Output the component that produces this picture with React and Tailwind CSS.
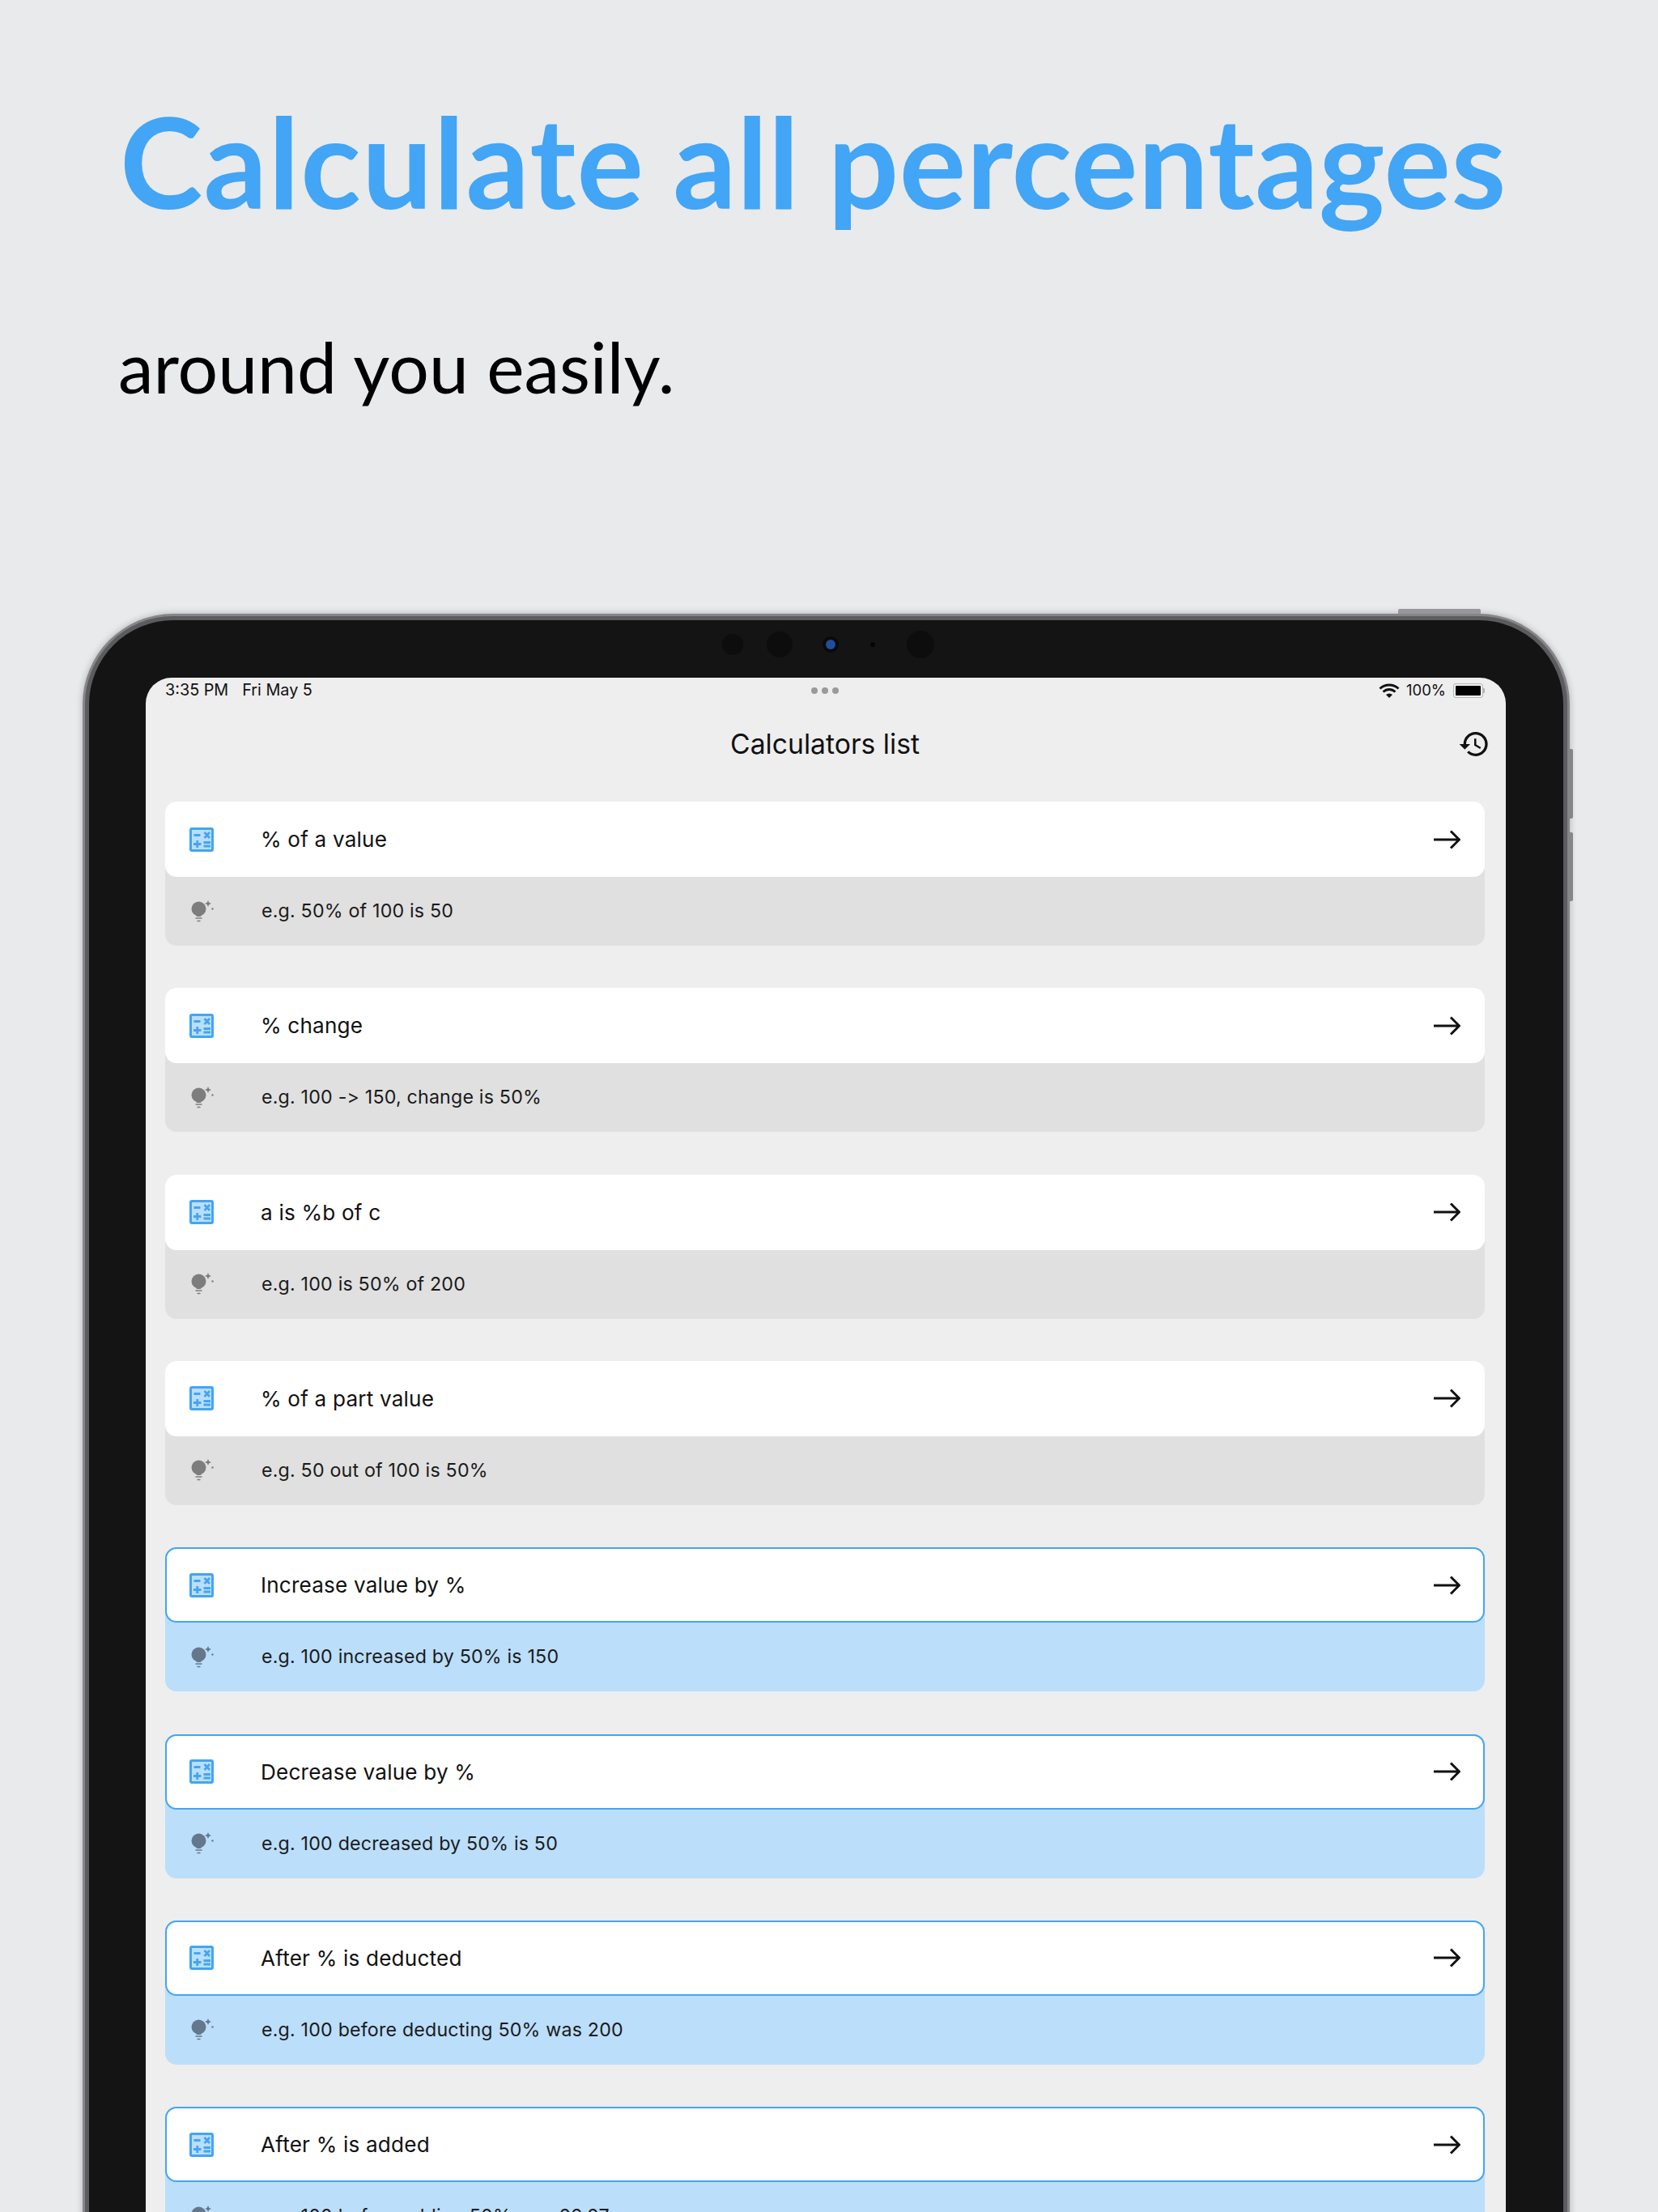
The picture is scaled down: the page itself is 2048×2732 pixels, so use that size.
const sans = "font-['Inter','Liberation_Sans',sans-serif]";

const calculators = [
  { title: '% of a value', hint: 'e.g. 50% of 100 is 50' },
  { title: '% change', hint: 'e.g. 100 -> 150, change is 50%' },
  { title: 'a is %b of c', hint: 'e.g. 100 is 50% of 200' },
  { title: '% of a part value', hint: 'e.g. 50 out of 100 is 50%' },
  { title: 'Increase value by %', hint: 'e.g. 100 increased by 50% is 150', active: true },
  { title: 'Decrease value by %', hint: 'e.g. 100 decreased by 50% is 50', active: true },
  { title: 'After % is deducted', hint: 'e.g. 100 before deducting 50% was 200', active: true },
  { title: 'After % is added', hint: 'e.g. 100 before adding 50% was 66.67', active: true },
];

function CalcIcon() {
  return (
    <svg width="30" height="30" viewBox="0 0 30 30" className="shrink-0">
      <rect x="0" y="0" width="30" height="30" rx="3" fill="#42a5f5" />
      <rect x="3" y="3" width="24" height="24" fill="#bbdefb" />
      <path d="M5.500 9.500h8M18.500 6l6.500 7M25 6l-6.500 7M5 20.500h9.500M9.750 16v9M17.500 18.500h8.500M17.500 23h8.500" stroke="#42a5f5" strokeWidth="2.8" fill="none" />
    </svg>
  );
}

function BulbIcon({ color }) {
  return (
    <svg width="28" height="28" viewBox="0 0 28 28" className="-mt-[2px] shrink-0">
      <circle cx="9.5" cy="11.5" r="9" fill={color} />
      <path d="M5 15h9l-2 6H7z" fill={color} />
      <path d="M5.500 23h8M7.500 26.500h4" stroke={color} strokeWidth="1.6" fill="none" />
      <path d="M21 1l1.200 2.800L25 5l-2.800 1.200L21 9l-1.200-2.800L17 5l2.800-1.200z" fill={color} />
      <circle cx="26.5" cy="11.5" r="1.2" fill={color} />
    </svg>
  );
}

function ArrowIcon() {
  return (
    <svg width="33" height="24" viewBox="0 0 33 24" className="shrink-0" fill="none" stroke="#111" strokeWidth="3">
      <path d="M0 12h31M21 1.500L31.500 12 21 22.500" />
    </svg>
  );
}

function HistoryIcon() {
  return (
    <svg width="40" height="40" viewBox="0 0 24 24" fill="#111" className="-mr-[7px]">
      <path d="M13 3c-4.970 0-9 4.030-9 9H1l3.890 3.890.07.14L9 12H6c0-3.870 3.130-7 7-7s7 3.130 7 7-3.130 7-7 7c-1.930 0-3.680-.79-4.940-2.060l-1.420 1.420C8.270 19.990 10.510 21 13 21c4.970 0 9-4.030 9-9s-4.030-9-9-9zm-1 5v5l4.280 2.540.72-1.210-3.500-2.080V8H12z" />
    </svg>
  );
}

function WifiIcon() {
  return (
    <svg width="26" height="18" viewBox="0 0 26 18" fill="none" stroke="#111" strokeWidth="2.8">
      <path d="M1.500 6.500C8 .5 18 .5 24.500 6.500M5.500 10.500c4.500-4 10.500-4 15 0" />
      <path d="M9 14c2.500-2 5.500-2 8 0l-4 4z" fill="#111" stroke="none" />
    </svg>
  );
}

function CalculatorCard({ title, hint, active }) {
  return (
    <div className={`rounded-[14px] ${active ? 'bg-[#bbdefb]' : 'bg-[#e0e0e0]'}`}>
      <div
        className={`flex h-[93px] items-center rounded-[14px] bg-white ${
          active ? 'border-2 border-[#42a5f5] px-[28px]' : 'px-[30px]'
        }`}
      >
        <CalcIcon />
        <span className={`ml-[58px] flex-1 text-[26.1px] tracking-[0.2px] text-[#111] ${sans}`}>{title}</span>
        <ArrowIcon />
      </div>
      <div className="flex h-[85px] items-center pl-[32px]">
        <BulbIcon color={active ? '#64788c' : '#7d7d7d'} />
        <span className={`ml-[59px] text-[23.2px] tracking-[0.2px] text-[#1a1a1a] ${sans}`}>{hint}</span>
      </div>
    </div>
  );
}

export default function App() {
  return (
    <div className="h-[2732px] w-[2048px] overflow-hidden bg-[#e9eaec]">
      <div className="h-[758px] pl-[146px]">
        <h1 className="pt-[109px] pl-[2px] text-[154.5px] leading-[180px] font-bold tracking-[0.4px] whitespace-nowrap text-[#42a5f5] [word-spacing:-3px] font-['Lato',sans-serif]">
          <span className="tracking-[1.4px]">Calculate</span> all percentages
        </h1>
        <p className="mt-[109px] text-[87.6px] leading-[110px] text-black font-['Lato',sans-serif]">around you easily.</p>
      </div>

      <div className="relative ml-[102px] h-[2100px] w-[1837px] rounded-[112px] bg-[#85858a] p-[3px] shadow-[0_0_8px_rgba(0,0,0,0.25)]">
        {/* hardware buttons */}
        <div className="absolute top-[-6px] left-[1625px] h-[6px] w-[102px] rounded-t-[2px] bg-[#98989c]" />
        <div className="absolute top-[167px] right-[-4px] h-[86px] w-[4px] rounded-r-[2px] bg-[#85858a]" />
        <div className="absolute top-[270px] right-[-4px] h-[85px] w-[4px] rounded-r-[2px] bg-[#85858a]" />

        <div className="h-full rounded-[109px] bg-[#5c5c5f] p-[5px]">
          <div className="relative h-full rounded-[104px] bg-[#141414] pt-[71px] pr-[71px] pl-[70px]">
            {/* cameras */}
            <div className="absolute top-[17px] left-[782px] h-[26px] w-[26px] rounded-full bg-[#0d0d0d]" />
            <div className="absolute top-[14px] left-[837px] h-[32px] w-[32px] rounded-full bg-[#0d0d0d]" />
            <div className="absolute top-[20px] left-[906px] flex h-[20px] w-[20px] items-center justify-center rounded-full bg-[#0a0a0a]">
              <div className="h-[12px] w-[12px] rounded-full bg-[#1d4f9c]" />
            </div>
            <div className="absolute top-[27px] left-[965px] h-[6px] w-[6px] rounded-full bg-[#050505]" />
            <div className="absolute top-[13px] left-[1010px] h-[34px] w-[34px] rounded-full bg-[#0d0d0d]" />

            <div className="h-[2100px] rounded-t-[32px] bg-[#eeeeee] pr-[26px] pl-[24px]">
              <div className={`grid h-8 grid-cols-3 items-center text-[#111] ${sans}`}>
                <div className="flex gap-[17px] text-[19.8px]">
                  <span>3:35 PM</span>
                  <span>Fri May 5</span>
                </div>
                <div className="flex justify-center gap-[5px]">
                  <span className="h-2 w-2 rounded-full bg-[#9a9a9a]" />
                  <span className="h-2 w-2 rounded-full bg-[#9a9a9a]" />
                  <span className="h-2 w-2 rounded-full bg-[#9a9a9a]" />
                </div>
                <div className="flex items-center justify-end text-[18.5px]">
                  <WifiIcon />
                  <span className="ml-2">100%</span>
                  <div className="ml-[9px] flex h-[18px] w-[37px] items-center justify-center rounded-[3px] border border-[#b5b5b5] p-[2px]">
                    <div className="h-full w-full rounded-[1px] bg-black" />
                  </div>
                  <div className="h-[6px] w-[2px] rounded-r-[1px] bg-[#b5b5b5]" />
                </div>
              </div>

              <div className="grid h-[100px] grid-cols-[1fr_auto_1fr] items-center">
                <div />
                <h2 className={`text-[33.7px] text-[#111] ${sans}`}>Calculators list</h2>
                <div className="flex justify-end">
                  <HistoryIcon />
                </div>
              </div>

              <div className="mt-[21px] flex flex-col gap-[52.33px]">
                {calculators.map((item) => (
                  <CalculatorCard key={item.title} {...item} />
                ))}
              </div>
            </div>
          </div>
        </div>
      </div>
    </div>
  );
}
